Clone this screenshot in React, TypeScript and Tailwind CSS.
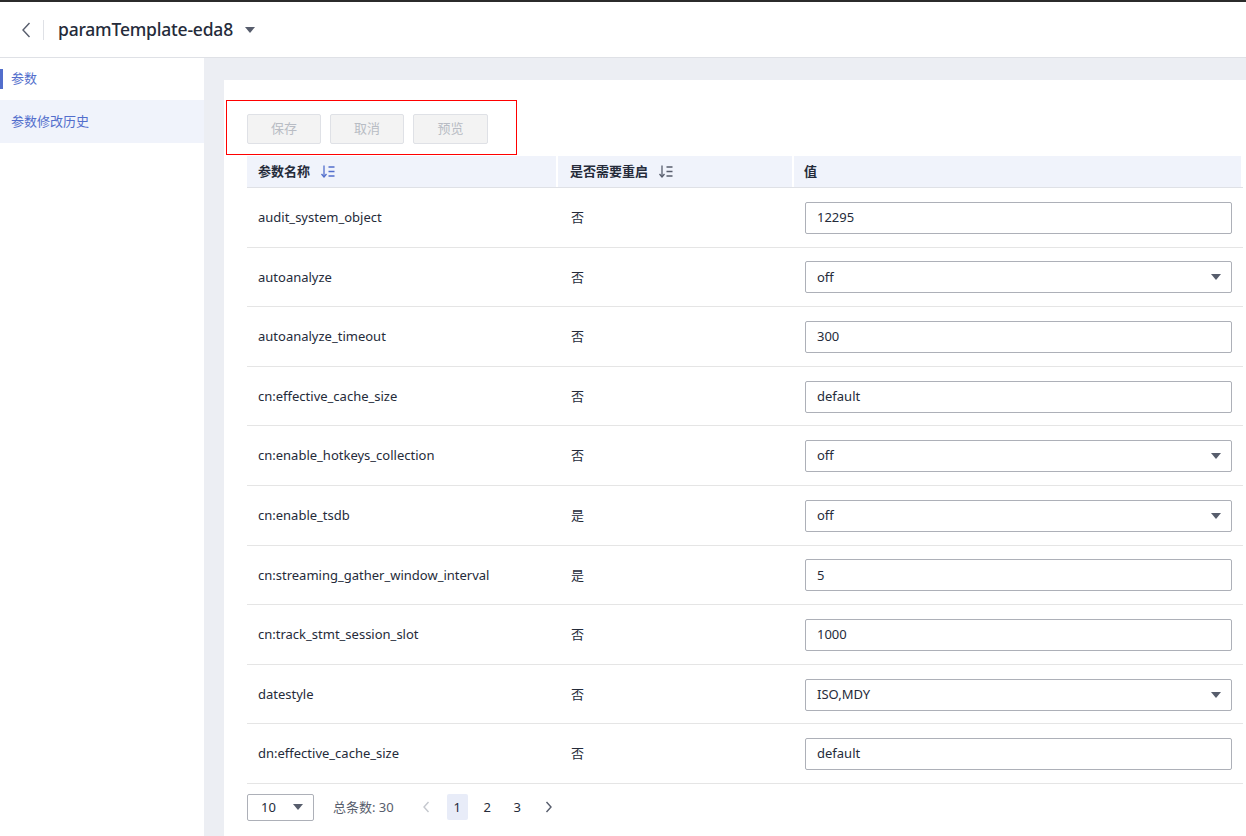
import React from "react";

type Row = { name: string; restart: string; value: string; select?: boolean };

const rows: Row[] = [
  { name: "audit_system_object", restart: "否", value: "12295" },
  { name: "autoanalyze", restart: "否", value: "off", select: true },
  { name: "autoanalyze_timeout", restart: "否", value: "300" },
  { name: "cn:effective_cache_size", restart: "否", value: "default" },
  { name: "cn:enable_hotkeys_collection", restart: "否", value: "off", select: true },
  { name: "cn:enable_tsdb", restart: "是", value: "off", select: true },
  { name: "cn:streaming_gather_window_interval", restart: "是", value: "5" },
  { name: "cn:track_stmt_session_slot", restart: "否", value: "1000" },
  { name: "datestyle", restart: "否", value: "ISO,MDY", select: true },
  { name: "dn:effective_cache_size", restart: "否", value: "default" },
];

const Caret = ({ className = "" }: { className?: string }) => (
  <svg width="10" height="6" viewBox="0 0 10 6" className={className}>
    <path d="M0 0h10L5 6z" fill="#575d6c" />
  </svg>
);

const SortIcon = ({ color }: { color: string }) => (
  <svg width="15" height="13" viewBox="0 0 15 13" fill="none" stroke={color} strokeWidth="1.3">
    <path d="M4 0.5v11" />
    <path d="M1.5 9l2.5 3 2.5-3" />
    <path d="M8.5 2h6M8.5 6.5h6M8.5 11h6" />
  </svg>
);

const Cell = ({ r }: { r: Row }) => (
  <div className="flex h-[59.6px] items-center border-b border-[#e5e5e5] pt-[1px] text-[13px] text-[#252b3a]">
    <div className="w-[311px] pl-[11px]">{r.name}</div>
    <div className="w-[236px] pl-[13px]">{r.restart}</div>
    <div className="flex-1 pl-[11px] pr-[11px]">
      <div className="flex h-[32px] items-center justify-between rounded-[2px] border border-[#adb0b8] bg-white pl-[11px] pr-[10px]">
        <span>{r.value}</span>
        {r.select && <Caret />}
      </div>
    </div>
  </div>
);

export default function App() {
  return (
    <div
      className="flex h-[836px] w-[1246px] flex-col overflow-hidden bg-white"
      style={{ fontFamily: '"Noto Sans", "Noto Sans CJK SC", sans-serif' }}
    >
      <div className="h-[2px] bg-[#2b2b2b]" />
      <div className="flex h-[56px] items-center border-b border-[#dfe1e6] bg-white">
        <svg width="10" height="16" viewBox="0 0 10 16" className="ml-[21px]" fill="none" stroke="#575d6c" strokeWidth="1.4">
          <path d="M8.5 1L2 8l6.5 7" />
        </svg>
        <div className="ml-[12px] h-[20px] w-px bg-[#dfe1e6]" />
        <span className="ml-[14px] text-[17.5px] font-medium tracking-[-0.2px] text-[#252b3a]">paramTemplate-eda8</span>
        <Caret className="ml-[12px]" />
      </div>
      <div className="flex flex-1">
        <div className="w-[204px] bg-white text-[13px]">
          <div className="flex h-[42px] items-center text-[#526ecc]">
            <div className="h-[20px] w-[3px] bg-[#526ecc]" />
            <span className="ml-[8px]">参数</span>
          </div>
          <div className="flex h-[43px] items-center bg-[#f0f3fb] pl-[11px] text-[#526ecc]">参数修改历史</div>
        </div>
        <div className="flex-1 bg-[#eceef3] pl-[20px] pt-[22px]">
          <div className="h-full bg-white pl-[2px] pt-[20px]">
            <div className="w-[291px] border border-[#ff0000] pb-[10px] pl-[20px] pt-[13px]">
              <div className="flex gap-[9px] text-[13px] text-[#b8bcc4]">
                <div className="flex h-[30px] w-[74px] items-center justify-center rounded-[2px] border border-[#dfe1e6] bg-[#f3f3f3]">保存</div>
                <div className="flex h-[30px] w-[74px] items-center justify-center rounded-[2px] border border-[#dfe1e6] bg-[#f3f3f3]">取消</div>
                <div className="flex h-[30px] w-[75px] items-center justify-center rounded-[2px] border border-[#dfe1e6] bg-[#f3f3f3]">预览</div>
              </div>
            </div>
            <div className="ml-[21px] mt-[1px] w-[996px]">
              <div className="flex h-[32px] items-stretch border-b border-[#dfe1e6] bg-[#f0f3fb] text-[13px] font-semibold text-[#252b3a]">
                <div className="flex w-[311px] items-center gap-[10px] border-r-2 border-white pl-[11px]">
                  参数名称 <SortIcon color="#526ecc" />
                </div>
                <div className="flex w-[236px] items-center gap-[10px] border-r-2 border-white pl-[12px]">
                  是否需要重启 <SortIcon color="#575d6c" />
                </div>
                <div className="flex flex-1 items-center border-r-2 border-white pl-[10px]">值</div>
              </div>
              {rows.map((r, idx) => (
                <Cell key={idx} r={r} />
              ))}
              <div className="flex items-center pt-[10px] text-[13px] text-[#252b3a]">
                <div className="flex h-[27px] w-[67px] items-center justify-between rounded-[2px] border border-[#adb0b8] pl-[13px] pr-[10px]">
                  <span>10</span>
                  <Caret />
                </div>
                <span className="ml-[19px] text-[#575d6c]">总条数: 30</span>
                <svg width="8" height="12" viewBox="0 0 8 12" className="ml-[28px]" fill="none" stroke="#c5c8ce" strokeWidth="1.4">
                  <path d="M6.5 1L2 6l4.5 5" />
                </svg>
                <div className="ml-[17px] flex h-[26px] w-[21px] items-center justify-center rounded-[2px] bg-[#e8ecf8] text-[#252b3a]">1</div>
                <span className="ml-[9px] w-[21px] text-center">2</span>
                <span className="ml-[9px] w-[21px] text-center">3</span>
                <svg width="8" height="12" viewBox="0 0 8 12" className="ml-[17px]" fill="none" stroke="#575d6c" strokeWidth="1.4">
                  <path d="M1.5 1L6 6l-4.5 5" />
                </svg>
              </div>
            </div>
          </div>
        </div>
      </div>
    </div>
  );
}
